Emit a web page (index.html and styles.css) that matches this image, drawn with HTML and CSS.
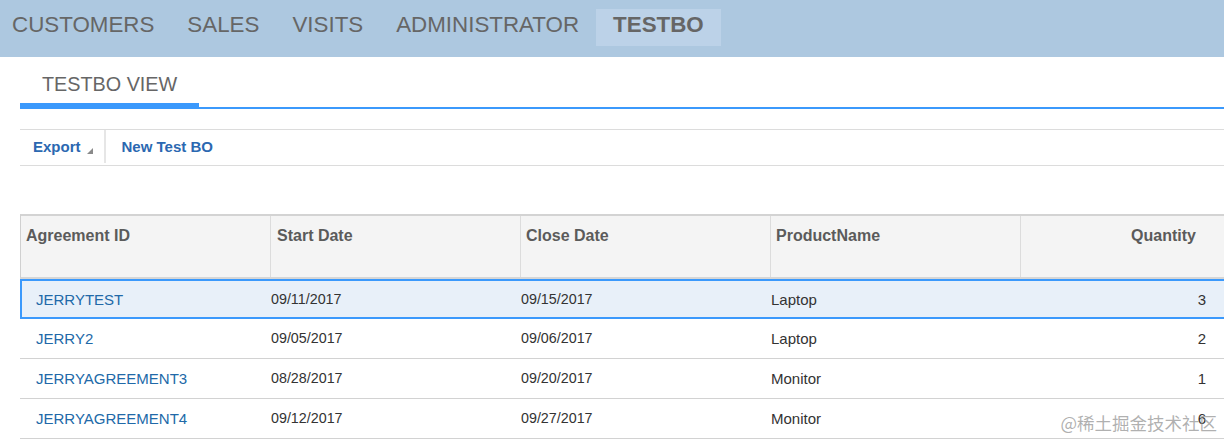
FILE: index.html
```html
<!DOCTYPE html>
<html lang="en">
<head>
<meta charset="utf-8">
<title>TESTBO</title>
<link rel="stylesheet" href="styles.css">
</head>
<body>
<nav class="nav">
  <div class="nav-item first">CUSTOMERS</div>
  <div class="nav-item">SALES</div>
  <div class="nav-item">VISITS</div>
  <div class="nav-item">ADMINISTRATOR</div>
  <div class="nav-item active">TESTBO</div>
</nav>
<main class="main">
  <div class="tabs">
    <div class="tab">TESTBO VIEW</div>
  </div>
  <div class="toolbar">
    <div class="tool export">Export
      <svg class="tri" width="6" height="6" viewBox="0 0 6 6"><polygon points="6,0 6,6 0,6" fill="#8a8a8a"/></svg>
    </div>
    <div class="tool">New Test BO</div>
  </div>
  <div class="table">
    <div class="row head">
      <div class="cell">Agreement ID</div>
      <div class="cell">Start Date</div>
      <div class="cell">Close Date</div>
      <div class="cell">ProductName</div>
      <div class="cell num">Quantity</div>
    </div>
    <div class="row data selected">
      <div class="cell id">JERRYTEST</div>
      <div class="cell date">09/11/2017</div>
      <div class="cell date">09/15/2017</div>
      <div class="cell">Laptop</div>
      <div class="cell num">3</div>
    </div>
    <div class="row data">
      <div class="cell id">JERRY2</div>
      <div class="cell date">09/05/2017</div>
      <div class="cell date">09/06/2017</div>
      <div class="cell">Laptop</div>
      <div class="cell num">2</div>
    </div>
    <div class="row data">
      <div class="cell id">JERRYAGREEMENT3</div>
      <div class="cell date">08/28/2017</div>
      <div class="cell date">09/20/2017</div>
      <div class="cell">Monitor</div>
      <div class="cell num">1</div>
    </div>
    <div class="row data">
      <div class="cell id">JERRYAGREEMENT4</div>
      <div class="cell date">09/12/2017</div>
      <div class="cell date">09/27/2017</div>
      <div class="cell">Monitor</div>
      <div class="cell num">6</div>
    </div>
  </div>
</main>
<div class="watermark">@稀土掘金技术社区</div>
</body>
</html>
```
FILE: styles.css
```css
html, body {
  margin: 0;
  padding: 0;
}
body {
  width: 1224px;
  height: 441px;
  overflow: hidden;
  position: relative;
  background: #ffffff;
  font-family: "Liberation Sans", Arial, sans-serif;
  color: #333;
}
.nav {
  height: 57px;
  background: #adc8e0;
  display: flex;
  align-items: flex-start;
}
.nav-item {
  margin-top: 9px;
  padding: 3px 16.5px 9px;
  font-size: 22.35px;
  line-height: 25px;
  color: #666;
}
.nav-item.first {
  padding-left: 12px;
}
.nav-item.active {
  background: #bcd2e8;
  font-weight: bold;
  padding-left: 17.5px;
  padding-right: 17px;
}
.main {
  padding-left: 20px;
  width: 1220px;
}
.tabs {
  margin-top: 16px;
  display: flex;
  border-bottom: 2px solid #3b99fc;
}
.tab {
  font-size: 19.8px;
  line-height: 23px;
  color: #666;
  padding: 0 22px 7px;
  border-bottom: 6px solid #3b99fc;
  margin-bottom: -2px;
}
.toolbar {
  margin-top: 20px;
  border-top: 1px solid #dcdcdc;
  border-bottom: 1px solid #dcdcdc;
  height: 35px;
  display: flex;
  align-items: flex-start;
}
.tool {
  font-size: 15px;
  font-weight: bold;
  color: #2b68b1;
  line-height: 17px;
  padding: 8px 16px 0 16px;
  height: 25px;
}
.tool.export {
  padding-left: 13px;
  padding-right: 11px;
  border-right: 2px solid #e6e6e6;
  display: flex;
  align-items: flex-start;
  gap: 6px;
}
.tri {
  margin-top: 10px;
}
.table {
  margin-top: 48px;
  width: 1215px;
}
.row {
  display: grid;
  grid-template-columns: 250px 250px 250px 250px 1fr;
}
.row.head {
  border-top: 2px solid #d3d3d3;
  border-bottom: 2px solid #d6d6d6;
  border-left: 1px solid #d0d0d0;
  background: #f4f4f4;
  height: 61px;
}
.row.head .cell {
  font-size: 16px;
  font-weight: bold;
  color: #5b5b5b;
  line-height: 18px;
  padding: 11px 5px 0 6px;
  border-right: 1px solid #dcdcdc;
}
.row.head .cell:first-child {
  padding-left: 5px;
}
.row.head .cell:nth-child(3),
.row.head .cell:nth-child(4) {
  padding-left: 5px;
}
.row.head .cell.num {
  text-align: right;
  padding-right: 39px;
  border-right: none;
}
.row.data {
  height: 39px;
  border-bottom: 1px solid #d2d2d2;
  align-items: center;
  font-size: 15px;
  line-height: 17px;
}
.row.data.selected {
  height: 36px;
  border: 2px solid #3b99fc;
  background: #e8f0f9;
}
.row.data .cell {
  padding-left: 1px;
  color: #333;
}
.row.data .cell.id {
  padding-left: 16px;
  color: #2169a8;
}
.row.data.selected .cell.id {
  padding-left: 14px;
}
.row.data .cell.date {
  font-size: 14.3px;
}
.row.data.selected .cell:not(.id) {
  margin-left: -2px;
}
.row.data .cell.num {
  text-align: right;
  padding-right: 29px;
}
.row.data.selected .cell.num {
  padding-right: 27px;
  margin-left: 0;
}
.watermark {
  position: absolute;
  right: 7px;
  bottom: 8px;
  font-family: "Noto Sans CJK SC", "Liberation Sans", sans-serif;
  font-size: 17.5px;
  line-height: 20px;
  color: rgba(150, 150, 150, 0.75);
}
```
